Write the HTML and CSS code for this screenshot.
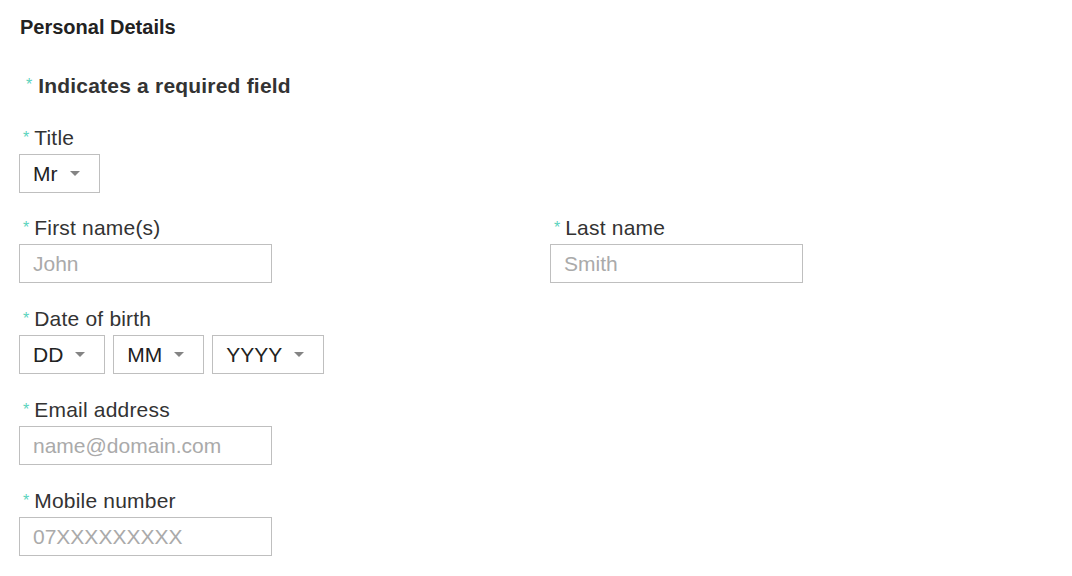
FILE: index.html
```html
<!DOCTYPE html>
<html lang="en">
<head>
<meta charset="utf-8">
<title>Personal Details</title>
<link rel="stylesheet" href="styles.css">
</head>
<body>
<form class="form">
  <h2 class="heading">Personal Details</h2>
  <p class="note"><span class="req">*</span>Indicates a required field</p>

  <div class="field field-first">
    <label class="label"><span class="req">*</span>Title</label>
    <div class="selects">
      <div class="select">Mr<svg class="caret" width="10" height="5" viewBox="0 0 10 5"><path d="M0 0h10L5 5z"/></svg></div>
    </div>
  </div>

  <div class="row">
    <div class="field col">
      <label class="label"><span class="req">*</span>First name(s)</label>
      <input class="input" type="text" placeholder="John">
    </div>
    <div class="field col">
      <label class="label"><span class="req">*</span>Last name</label>
      <input class="input" type="text" placeholder="Smith">
    </div>
  </div>

  <div class="field">
    <label class="label"><span class="req">*</span>Date of birth</label>
    <div class="selects">
      <div class="select">DD<svg class="caret" width="10" height="5" viewBox="0 0 10 5"><path d="M0 0h10L5 5z"/></svg></div>
      <div class="select">MM<svg class="caret" width="10" height="5" viewBox="0 0 10 5"><path d="M0 0h10L5 5z"/></svg></div>
      <div class="select">YYYY<svg class="caret" width="10" height="5" viewBox="0 0 10 5"><path d="M0 0h10L5 5z"/></svg></div>
    </div>
  </div>

  <div class="field">
    <label class="label"><span class="req">*</span>Email address</label>
    <input class="input" type="text" placeholder="name@domain.com">
  </div>

  <div class="field">
    <label class="label"><span class="req">*</span>Mobile number</label>
    <input class="input" type="text" placeholder="07XXXXXXXXX">
  </div>
</form>
</body>
</html>
```

FILE: styles.css
```css
* { box-sizing: border-box; }
html, body { margin: 0; padding: 0; background: #fff; }
body {
  font-family: "Liberation Sans", Arial, Helvetica, sans-serif;
  color: #333;
}
.form {
  padding: 15px 0 0 19px;
}
.heading {
  margin: 0;
  font-size: 20px;
  line-height: 24px;
  font-weight: bold;
  color: #222;
  padding-left: 1px;
}
.note {
  margin: 34px 0 26px;
  font-size: 21px;
  line-height: 26px;
  font-weight: bold;
  color: #333;
  letter-spacing: 0.2px;
}
.req {
  display: inline-block;
  color: #5ad3bd;
  font-size: 16px;
  font-weight: normal;
  line-height: 1;
  letter-spacing: 0;
  vertical-align: 2px;
  padding-left: 4px;
  margin-right: 5px;
}
.note .req {
  vertical-align: 3px;
  padding-left: 7px;
  margin-right: 6px;
}
.field {
  display: flex;
  flex-direction: column;
  align-items: flex-start;
  margin-bottom: 23px;
}
.field-first {
  margin-bottom: 22px;
}
.label {
  font-size: 21px;
  line-height: 24px;
  padding-top: 1px;
  margin-bottom: 4px;
  color: #333;
  letter-spacing: 0.2px;
}
.row {
  display: flex;
}
.row .col {
  flex: none;
  width: 531px;
}
.input {
  width: 253px;
  height: 39px;
  border: 1px solid #bfbfbf;
  border-radius: 0;
  padding: 0 13px;
  font-family: inherit;
  font-size: 21px;
  color: #333;
  background: #fff;
  outline: none;
  margin: 0;
}
.input::placeholder {
  color: #aaa;
}
.selects {
  display: flex;
  gap: 8px;
}
.select {
  display: flex;
  align-items: center;
  gap: 12px;
  height: 39px;
  padding: 0 19px 0 13px;
  border: 1px solid #bfbfbf;
  font-size: 21px;
  color: #222;
}
.caret {
  fill: #848484;
  flex: none;
}
```
